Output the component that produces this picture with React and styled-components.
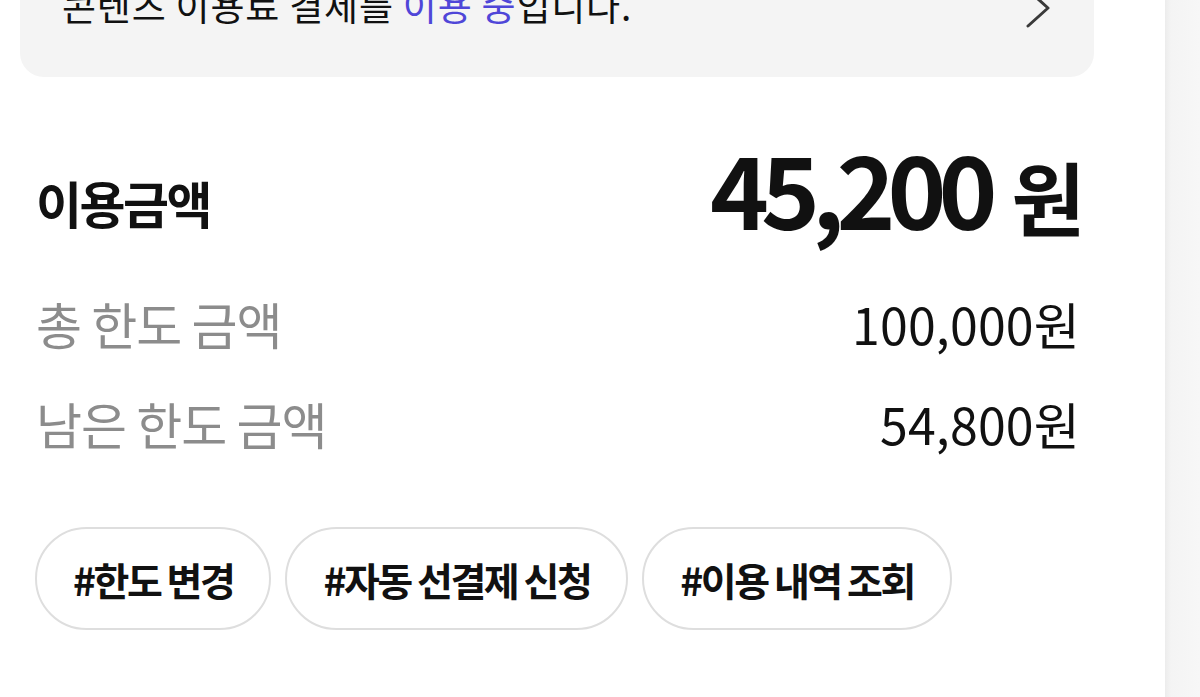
import React from 'react';
import styled, { createGlobalStyle } from 'styled-components';

const GlobalStyle = createGlobalStyle`
  html, body {
    margin: 0;
    padding: 0;
    background: #fff;
    overflow: hidden;
  }
  body {
    font-family: "Noto Sans CJK KR", "Noto Sans", sans-serif;
    color: #111;
  }
`;

const chips = ['#한도 변경', '#자동 선결제 신청', '#이용 내역 조회'];

const details = [
  { label: '총 한도 금액', value: '100,000원' },
  { label: '남은 한도 금액', value: '54,800원' },
];

const App = () => (
  <Page>
    <GlobalStyle />
    <Main>
      <NoticeCard>
        <NoticeText>
          콘텐츠 이용료 결제를 <Highlight>이용 중</Highlight>입니다.
        </NoticeText>
        <Chevron viewBox="0 0 30 44">
          <path d="M6 8L26 26L6 44" />
        </Chevron>
      </NoticeCard>

      <Section>
        <SummaryRow>
          <SummaryLabel>이용금액</SummaryLabel>
          <Amount>
            45,200<Unit>원</Unit>
          </Amount>
        </SummaryRow>

        <DetailList>
          {details.map((d) => (
            <DetailRow key={d.label}>
              <DetailLabel>{d.label}</DetailLabel>
              <DetailValue>{d.value}</DetailValue>
            </DetailRow>
          ))}
        </DetailList>

        <ChipRow>
          {chips.map((c) => (
            <Chip key={c}>{c}</Chip>
          ))}
        </ChipRow>
      </Section>
    </Main>
    <SideStrip />
  </Page>
);

const Page = styled.div`
  display: flex;
  height: 697px;
  width: 1200px;
`;

const Main = styled.div`
  width: 1074px;
  padding-left: 20px;
  margin-right: 71px;
`;

const NoticeCard = styled.div`
  display: flex;
  align-items: flex-start;
  justify-content: space-between;
  margin-top: -40px;
  height: 117px;
  box-sizing: border-box;
  padding: 22px 42px 0 42px;
  background: #f4f4f4;
  border-radius: 0 0 24px 24px;
`;

const NoticeText = styled.div`
  font-size: 37px;
  letter-spacing: 0.8px;
  line-height: 46px;
  color: #111;
`;

const Highlight = styled.span`
  color: #4f46d8;
`;

const Chevron = styled.svg`
  width: 30px;
  height: 44px;
  overflow: visible;
  fill: none;
  stroke: #3a3a3a;
  stroke-width: 3;
  stroke-linecap: round;
  stroke-linejoin: round;
`;

const Section = styled.div`
  padding: 0 14px 0 16px;
`;

const SummaryRow = styled.div`
  display: flex;
  align-items: center;
  justify-content: space-between;
  height: 100px;
  margin-top: 78px;
`;

const SummaryLabel = styled.div`
  font-size: 50px;
  font-weight: 700;
  letter-spacing: -2.5px;
  margin-bottom: 6px;
`;

const Amount = styled.div`
  display: flex;
  align-items: baseline;
  margin-bottom: 36px;
  margin-right: -5px;
  font-size: 100px;
  font-weight: 700;
  letter-spacing: -8px;
  line-height: 1;
`;

const Unit = styled.span`
  margin-left: 22px;
  font-size: 80px;
  letter-spacing: 0;
`;

const DetailList = styled.div`
  margin-top: 18px;
`;

const DetailRow = styled.div`
  display: flex;
  align-items: center;
  justify-content: space-between;
  height: 100px;
`;

const DetailLabel = styled.div`
  font-size: 50px;
  color: #8c8c8c;
  letter-spacing: -1px;
`;

const DetailValue = styled.div`
  font-size: 50px;
  color: #111;
  letter-spacing: 0.2px;
`;

const ChipRow = styled.div`
  display: flex;
  gap: 14px;
  margin-top: 54px;
  margin-left: -1px;
`;

const Chip = styled.div`
  display: flex;
  align-items: center;
  height: 103px;
  box-sizing: border-box;
  padding: 0 36px;
  border: 2px solid #dedede;
  border-radius: 52px;
  font-size: 39px;
  font-weight: 700;
  letter-spacing: -2.5px;
  color: #111;
`;

const SideStrip = styled.div`
  width: 35px;
  background: linear-gradient(to right, #ececec 0, #f4f4f4 6px, #f7f7f7 100%);
`;

export default App;
